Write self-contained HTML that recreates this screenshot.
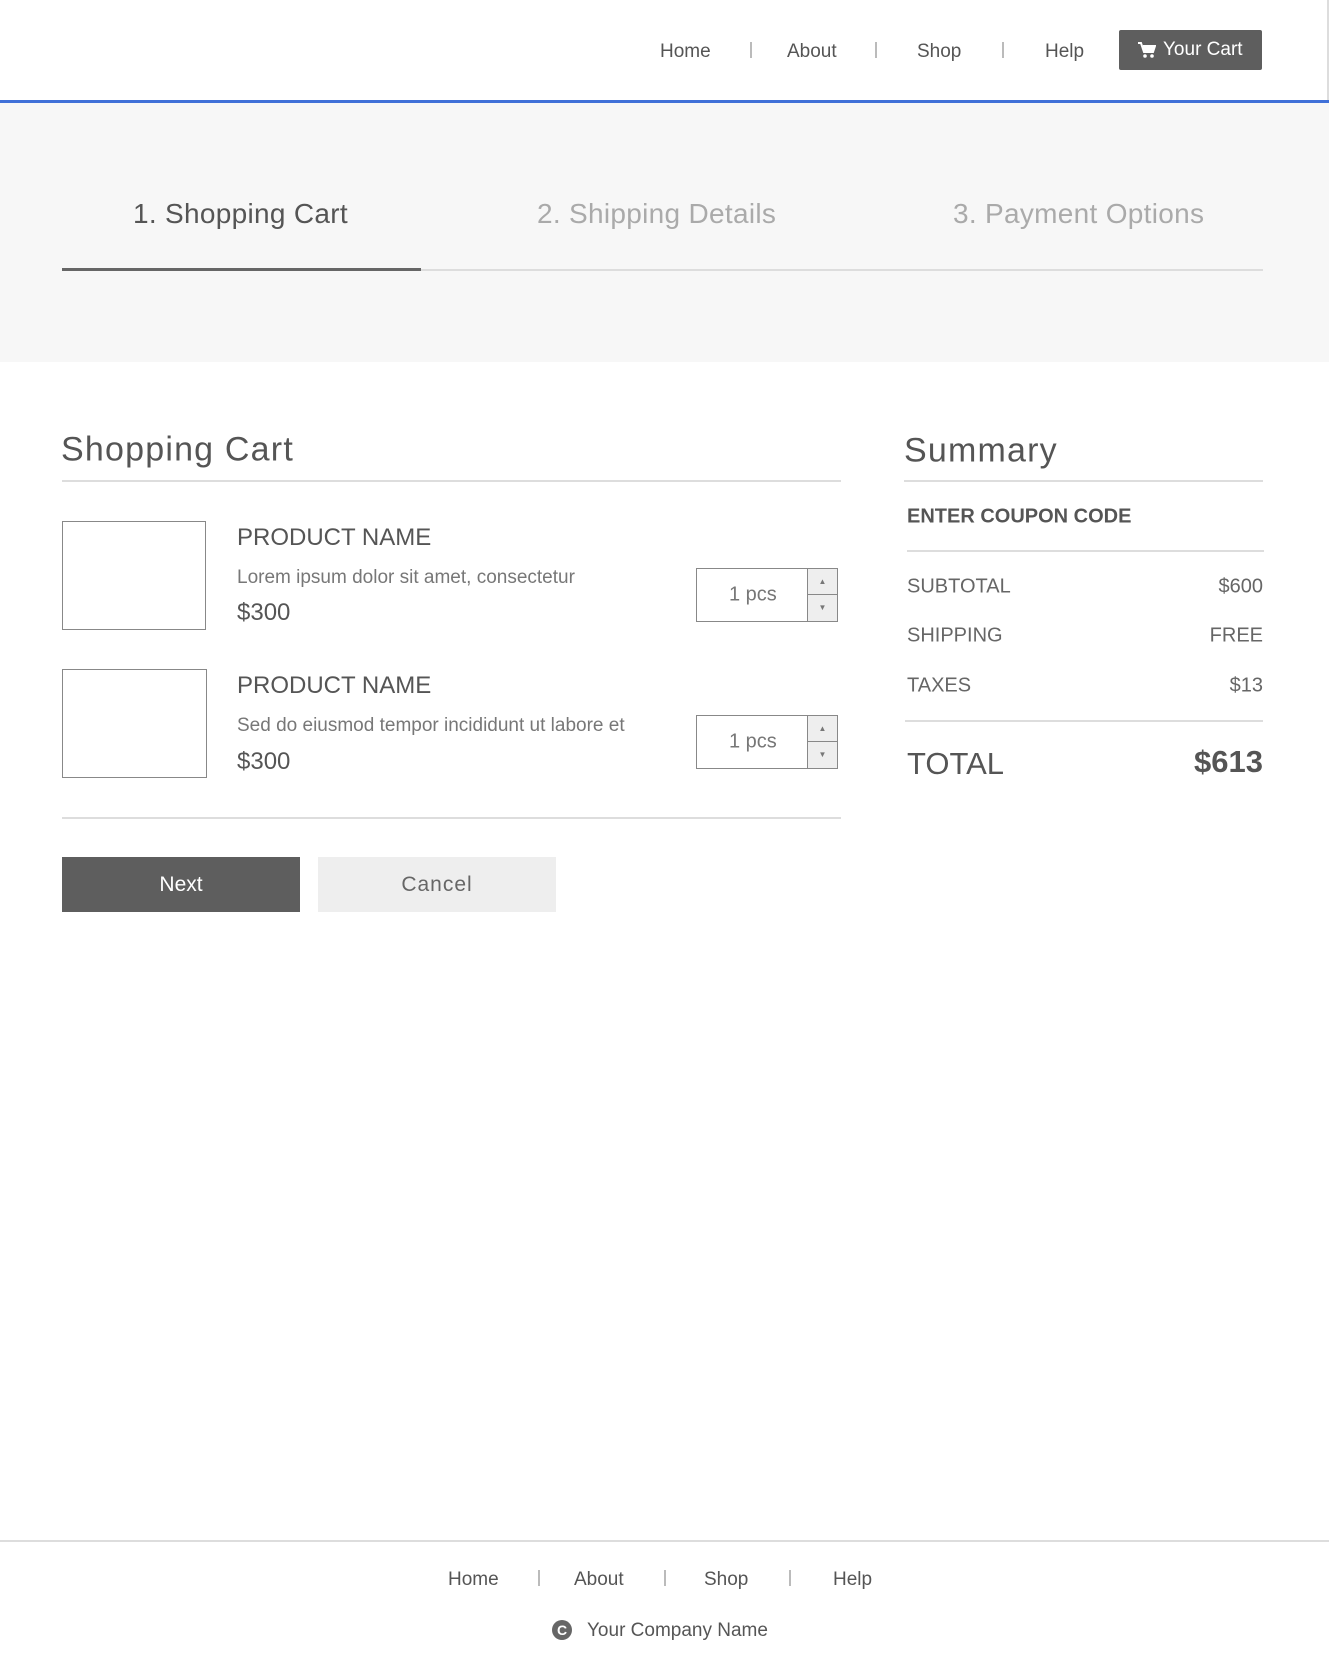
<!DOCTYPE html>
<html><head><meta charset="utf-8"><style>
*{margin:0;padding:0;box-sizing:border-box}
body{width:1329px;height:1670px;position:relative;background:#fff;font-family:"Liberation Sans",sans-serif;color:#555;overflow:hidden}
.a{position:absolute;white-space:nowrap}
.c{transform:translateY(-50%)}
.nav{font-size:19px;color:#555}
.sep{position:absolute;width:2px;height:16px;background:#bbb}
.ln{position:absolute;height:2px;background:#ddd}
.box{position:absolute;border:1.5px solid #888}
.qty{position:absolute;width:142px;height:54px;border:1.5px solid #888;background:#fff}
.qty span{position:absolute;left:32px;top:50%;transform:translateY(-50%);font-size:20px;color:#777}
.sp{position:absolute;right:0;top:0;width:30px;height:100%;border-left:1.5px solid #888;background:#eee}
.sp i{position:absolute;left:0;width:100%;height:50%;font-style:normal;font-size:8px;color:#777;text-align:center;line-height:25px}
</style></head><body>
<div class="a" style="left:0;top:0;width:1329px;height:101px;background:#fff"></div>
<div class="a" style="left:1327px;top:0;width:2px;height:101px;background:#ddd"></div>
<div class="a" style="left:0;top:100px;width:1329px;height:3px;background:#4070d8"></div>
<div class="a nav c" style="left:660px;top:52px">Home</div>
<div class="sep" style="left:750px;top:42px"></div>
<div class="a nav c" style="left:787px;top:52px">About</div>
<div class="sep" style="left:875px;top:42px"></div>
<div class="a nav c" style="left:917px;top:52px">Shop</div>
<div class="sep" style="left:1002px;top:42px"></div>
<div class="a nav c" style="left:1045px;top:52px">Help</div>
<div class="a" style="left:1119px;top:30px;width:143px;height:40px;background:#5e5e5e;border-radius:2px;color:#fff;font-size:19px;line-height:40px;padding-left:44px">Your Cart</div>
<svg class="a" style="left:1138px;top:42px" width="18" height="17" viewBox="0 0 18 17"><path d="M0 1h3l3 9h9l2-6H5" fill="none" stroke="#fff" stroke-width="2"/><path d="M5 4h12l-2 6H6z" fill="#fff"/><circle cx="7" cy="14" r="1.8" fill="#fff"/><circle cx="14" cy="14" r="1.8" fill="#fff"/></svg>
<div class="a" style="left:0;top:103px;width:1329px;height:259px;background:#f7f7f7"></div>
<div class="a c" style="left:133px;top:214px;font-size:28px;color:#555;letter-spacing:.3px">1. Shopping Cart</div>
<div class="a c" style="left:537px;top:214px;font-size:28px;color:#aaa;letter-spacing:.3px">2. Shipping Details</div>
<div class="a c" style="left:953px;top:214px;font-size:28px;color:#aaa;letter-spacing:.3px">3. Payment Options</div>
<div class="ln" style="left:62px;top:269px;width:1201px;background:#ddd"></div>
<div class="ln" style="left:62px;top:268px;width:359px;height:3px;background:#666"></div>
<div class="a c" style="left:61px;top:450px;font-size:34px;color:#555;letter-spacing:1.2px;font-weight:300">Shopping Cart</div>
<div class="ln" style="left:62px;top:480px;width:779px"></div>
<div class="a c" style="left:904px;top:451px;font-size:34px;color:#555;letter-spacing:1.2px">Summary</div>
<div class="ln" style="left:904px;top:480px;width:359px"></div>
<div class="box" style="left:62px;top:521px;width:144px;height:109px"></div>
<div class="a c" style="left:237px;top:538px;font-size:24px;color:#555">PRODUCT NAME</div>
<div class="a c" style="left:237px;top:578px;font-size:19px;color:#777">Lorem ipsum dolor sit amet, consectetur</div>
<div class="a c" style="left:237px;top:613px;font-size:24px;color:#555">$300</div>
<div class="qty" style="left:696px;top:568px"><span>1 pcs</span><div class="sp"><i style="top:0;border-bottom:1.5px solid #888">▲</i><i style="top:50%">▼</i></div></div>
<div class="box" style="left:62px;top:669px;width:145px;height:109px"></div>
<div class="a c" style="left:237px;top:686px;font-size:24px;color:#555">PRODUCT NAME</div>
<div class="a c" style="left:237px;top:726px;font-size:19px;color:#777">Sed do eiusmod tempor incididunt ut labore et</div>
<div class="a c" style="left:237px;top:762px;font-size:24px;color:#555">$300</div>
<div class="qty" style="left:696px;top:715px"><span>1 pcs</span><div class="sp"><i style="top:0;border-bottom:1.5px solid #888">▲</i><i style="top:50%">▼</i></div></div>
<div class="ln" style="left:62px;top:817px;width:779px"></div>
<div class="a" style="left:62px;top:857px;width:238px;height:55px;background:#5e5e5e;color:#fff;font-size:21px;line-height:55px;text-align:center">Next</div>
<div class="a" style="left:318px;top:857px;width:238px;height:55px;background:#eee;color:#666;font-size:21px;line-height:55px;text-align:center;letter-spacing:1px">Cancel</div>
<div class="a c" style="left:907px;top:517px;font-size:20px;font-weight:bold;color:#555">ENTER COUPON CODE</div>
<div class="ln" style="left:907px;top:550px;width:357px"></div>
<div class="a c" style="left:907px;top:587px;font-size:20px;color:#666">SUBTOTAL</div>
<div class="a c" style="right:66px;top:587px;font-size:20px;color:#666">$600</div>
<div class="a c" style="left:907px;top:636px;font-size:20px;color:#666">SHIPPING</div>
<div class="a c" style="right:66px;top:636px;font-size:20px;color:#666">FREE</div>
<div class="a c" style="left:907px;top:686px;font-size:20px;color:#666">TAXES</div>
<div class="a c" style="right:66px;top:686px;font-size:20px;color:#666">$13</div>
<div class="ln" style="left:905px;top:720px;width:358px"></div>
<div class="a c" style="left:907px;top:764px;font-size:31px;color:#555">TOTAL</div>
<div class="a c" style="right:66px;top:762px;font-size:31px;color:#555;font-weight:bold">$613</div>
<div class="ln" style="left:0;top:1540px;width:1329px"></div>
<div class="a nav c" style="left:448px;top:1580px">Home</div>
<div class="sep" style="left:538px;top:1570px"></div>
<div class="a nav c" style="left:574px;top:1580px">About</div>
<div class="sep" style="left:664px;top:1570px"></div>
<div class="a nav c" style="left:704px;top:1580px">Shop</div>
<div class="sep" style="left:789px;top:1570px"></div>
<div class="a nav c" style="left:833px;top:1580px">Help</div>
<div class="a" style="left:552px;top:1620px;width:20px;height:20px;border-radius:50%;background:#666;color:#fff;font-size:14px;font-weight:bold;line-height:20px;text-align:center">C</div>
<div class="a nav c" style="left:587px;top:1631px">Your Company Name</div>
</body></html>
